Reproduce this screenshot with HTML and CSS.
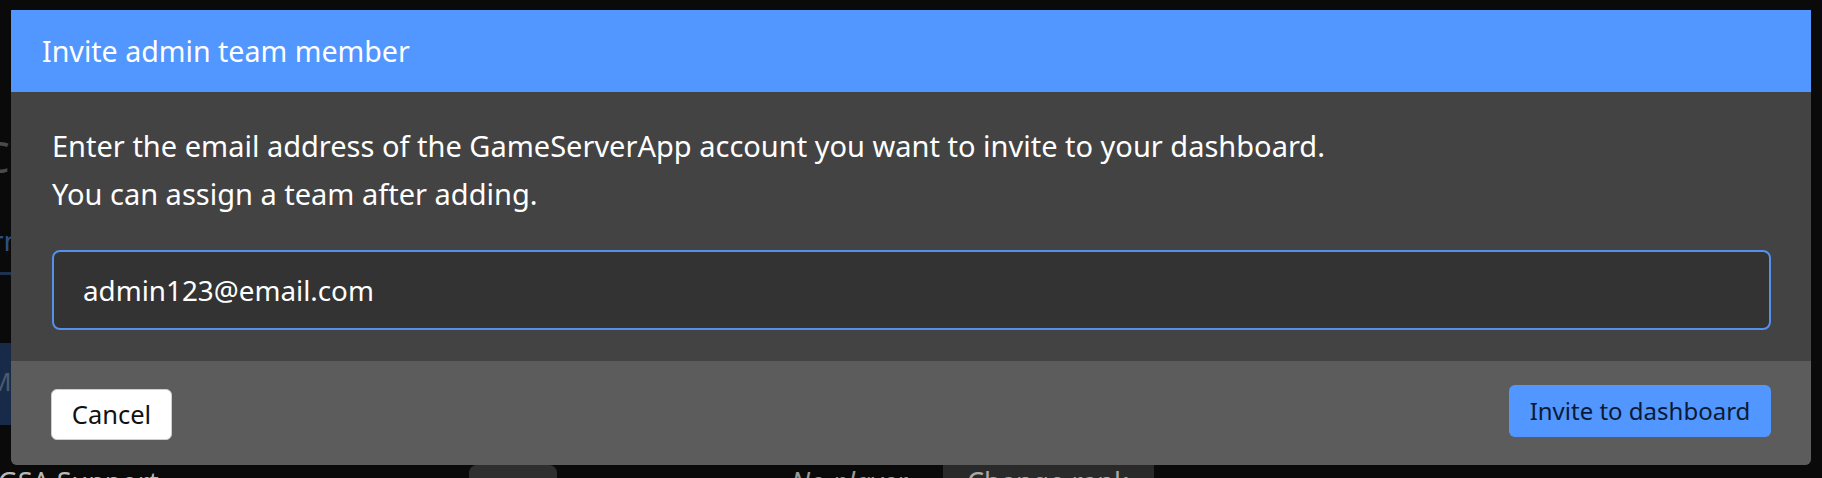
FILE: index.html
```html
<!DOCTYPE html>
<html lang="en">
<head>
<meta charset="utf-8">
<title>Invite admin team member</title>
<link rel="stylesheet" href="styles.css">
</head>
<body>
<div class="page">
  <div class="bg-content">
    <div class="bg-title">Co</div>
    <div class="bg-link">rn</div>
    <div class="bg-rule"></div>
    <div class="bg-tab">Me</div>
    <div class="bg-row">
      <span class="bg-name">GSA Support</span>
      <span class="bg-pill"></span>
      <span class="bg-status">No player</span>
      <span class="bg-select">Change rank</span>
    </div>
  </div>

  <div class="modal" role="dialog" aria-labelledby="modal-title">
    <div class="modal-header">
      <h2 class="modal-title" id="modal-title">Invite admin team member</h2>
    </div>
    <div class="modal-body">
      <p class="modal-text">Enter the email address of the GameServerApp account you want to invite to your dashboard.<br>You can assign a team after adding.</p>
      <input class="email-input" type="email" value="admin123@email.com">
    </div>
    <div class="modal-footer">
      <button class="btn btn-cancel" type="button">Cancel</button>
      <button class="btn btn-primary" type="button">Invite to dashboard</button>
    </div>
  </div>
</div>
</body>
</html>
```

FILE: styles.css
```css
* {
  box-sizing: border-box;
}

html, body {
  margin: 0;
  padding: 0;
  width: 1822px;
  height: 478px;
  overflow: hidden;
  background: #0a0a0a;
  font-family: "Noto Sans", "Open Sans", sans-serif;
}

.page {
  position: relative;
  width: 1822px;
  height: 478px;
  overflow: hidden;
}

/* dimmed page behind the dialog */
.bg-content {
  display: flex;
  flex-direction: column;
  padding-top: 128px;
  color: #555;
}

.bg-title {
  margin-left: -18px;
  font-size: 44px;
  line-height: 56px;
  color: #4a4a4a;
}

.bg-link {
  margin-top: 38px;
  margin-left: -8px;
  font-size: 28px;
  line-height: 36px;
  color: #2c4f86;
}

.bg-rule {
  margin-top: 14px;
  width: 60px;
  height: 3px;
  background: #1e3150;
}

.bg-tab {
  margin-top: 68px;
  width: 60px;
  height: 82px;
  padding-top: 20px;
  font-size: 26px;
  color: #4d5a6e;
  background: #172a48;
  text-indent: -12px;
}

.bg-row {
  display: flex;
  align-items: flex-start;
  margin-top: 39px;
  height: 40px;
  font-size: 27px;
  line-height: 36px;
  color: #b8b8b8;
}

.bg-name {
  width: 471px;
  margin-left: -2px;
}

.bg-pill {
  width: 88px;
  height: 32px;
  margin-top: 1px;
  border-radius: 8px;
  background: #2f2f2f;
}

.bg-status {
  margin-left: 234px;
  width: 152px;
  font-style: italic;
  color: #9a9a9a;
}

.bg-select {
  width: 211px;
  height: 40px;
  padding-left: 24px;
  background: #2a2a2a;
  color: #aaa;
}

/* dialog */
.modal {
  position: absolute;
  left: 11px;
  top: 10px;
  width: 1800px;
  display: flex;
  flex-direction: column;
  border-radius: 0 0 6px 6px;
  overflow: hidden;
  background: #434343;
}

.modal-header {
  height: 82px;
  display: flex;
  align-items: center;
  padding: 0 31px;
  background: #5296ff;
}

.modal-title {
  margin: 0;
  font-size: 28.6px;
  font-weight: 400;
  color: #ffffff;
  line-height: 1;
}

.modal-body {
  display: flex;
  flex-direction: column;
  padding: 30px 40px 31px 41px;
  background: #434343;
}

.modal-text {
  margin: 0;
  font-size: 29px;
  line-height: 48px;
  color: #ffffff;
}

.email-input {
  margin-top: 32px;
  height: 80px;
  width: 100%;
  padding: 0 28px 0 29px;
  border: 2px solid #5590ea;
  border-radius: 8px;
  background: #333333;
  color: #ffffff;
  font-family: "Noto Sans", "Open Sans", sans-serif;
  font-size: 27.8px;
  outline: none;
}

.modal-footer {
  display: flex;
  justify-content: space-between;
  align-items: flex-start;
  height: 104px;
  padding: 24px 40px 0 40px;
  background: #5c5c5c;
}

.btn {
  font-family: "Noto Sans", "Open Sans", sans-serif;
  border-radius: 6px;
  cursor: pointer;
  line-height: 1;
}

.btn-cancel {
  margin-top: 4px;
  width: 121px;
  height: 51px;
  padding: 0;
  font-size: 25.5px;
  background: #ffffff;
  color: #111111;
  border: 1px solid #cfcfcf;
}

.btn-primary {
  width: 262px;
  height: 52px;
  padding: 0;
  font-size: 24px;
  background: #5296ff;
  color: #0b1a33;
  border: none;
}
```
